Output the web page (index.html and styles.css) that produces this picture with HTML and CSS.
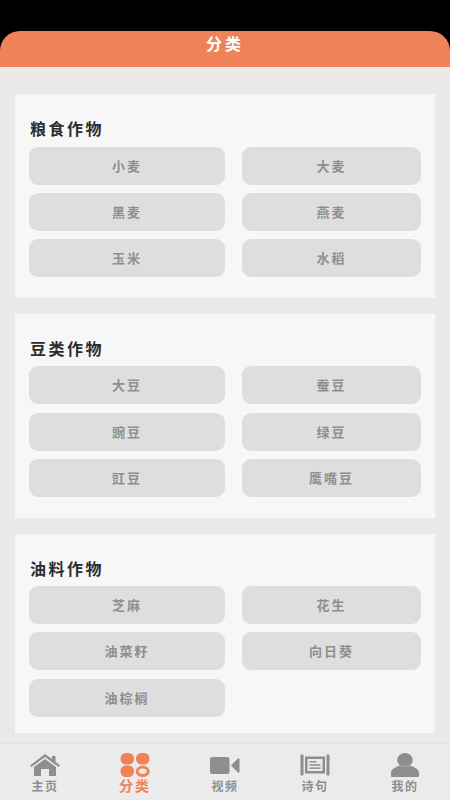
FILE: index.html

```html
<!DOCTYPE html>
<html lang="zh">

<head>
    <meta charset="UTF-8">
    <meta name="viewport" content="width=device-width, initial-scale=1.0">
    <title>分类</title>
    <link rel="stylesheet" href="styles.css">
</head>

<body>
    <div class="app">
        <header class="top-bar">分类</header>

        <main class="content">
            <section class="card">
                <h2>粮食作物</h2>
                <div class="items">
                    <div class="item">小麦</div>
                    <div class="item">大麦</div>
                    <div class="item">黑麦</div>
                    <div class="item">燕麦</div>
                    <div class="item">玉米</div>
                    <div class="item">水稻</div>
                </div>
            </section>

            <section class="card">
                <h2>豆类作物</h2>
                <div class="items">
                    <div class="item">大豆</div>
                    <div class="item">蚕豆</div>
                    <div class="item">豌豆</div>
                    <div class="item">绿豆</div>
                    <div class="item">豇豆</div>
                    <div class="item">鹰嘴豆</div>
                </div>
            </section>

            <section class="card card-last">
                <h2>油料作物</h2>
                <div class="items">
                    <div class="item">芝麻</div>
                    <div class="item">花生</div>
                    <div class="item">油菜籽</div>
                    <div class="item">向日葵</div>
                    <div class="item">油棕榈</div>
                </div>
            </section>
        </main>

        <nav class="tab-bar">
            <div class="tab">
                <svg viewBox="0 0 30 22" class="icon" fill="#8e8e8e">
                    <path d="M15 0 L22 5 V2 H25.5 V7.8 L30 11.5 L28.6 13 L15 3 L1.4 13 L0 11.5 Z" />
                    <path d="M15 5 L26 13 V22 H19 V15 H11 V22 H4 V13 Z" />
                </svg>
                <span>主页</span>
            </div>
            <div class="tab tab-active">
                <svg viewBox="0 0 30 24" class="icon" fill="#ef8259">
                    <rect x="0.5" y="0" width="13.5" height="11.5" rx="5.4" />
                    <rect x="16" y="0" width="13.5" height="11.5" rx="5.4" />
                    <rect x="0.5" y="12.5" width="13.5" height="11.5" rx="5.4" />
                    <ellipse cx="22.7" cy="18.3" rx="5.5" ry="4.2" fill="none" stroke="#ef8259" stroke-width="3" />
                </svg>
                <span>分类</span>
            </div>
            <div class="tab">
                <svg viewBox="0 0 30 22" class="icon" fill="#8e8e8e">
                    <rect x="0" y="3" width="19.5" height="17" rx="2.5" />
                    <path d="M21 11.5 L28 4.5 Q29.5 3.5 29.5 5.5 V17.5 Q29.5 19.5 28 18.5 Z" />
                </svg>
                <span>视频</span>
            </div>
            <div class="tab">
                <svg viewBox="0 0 30 22" class="icon" fill="#8e8e8e">
                    <rect x="0.5" y="0.5" width="3" height="21" rx="1" />
                    <rect x="26.5" y="0.5" width="3" height="21" rx="1" />
                    <path fill-rule="evenodd" d="M5 2.5 H25 V19.5 H5 Z M7.5 5 V17 H22.5 V5 Z" />
                    <rect x="9.5" y="7" width="7" height="1.5" />
                    <rect x="9.5" y="10.2" width="11" height="1.5" />
                    <rect x="9.5" y="13.4" width="11" height="1.5" />
                </svg>
                <span>诗句</span>
            </div>
            <div class="tab">
                <svg viewBox="0 0 30 24" class="icon" fill="#8e8e8e">
                    <ellipse cx="15" cy="7" rx="7.8" ry="7" />
                    <path d="M1.5 24 Q1 24 1 22 V20 C1 16 6 14 10 12.5 C13 14.5 17 14.5 20 12.5 C24 14 29 16 29 20 V22 Q29 24 28 24 Z" />
                </svg>
                <span>我的</span>
            </div>
        </nav>
    </div>
</body>

</html>
```

FILE: styles.css

```css
* {
    box-sizing: border-box;
}

html, body {
    margin: 0;
    padding: 0;
    background-color: #000;
}

body {
    font-family: "Noto Sans CJK SC", "Liberation Sans", sans-serif;
}

.app {
    width: 450px;
    height: 800px;
    padding-top: 31px;
    display: flex;
    flex-direction: column;
    overflow: hidden;
}

.top-bar {
    height: 35.5px;
    background-color: #ef8259;
    border-radius: 20px 20px 0 0;
    color: #fff;
    font-size: 16px;
    font-weight: 700;
    letter-spacing: 3px;
    line-height: 25px;
    text-align: center;
}

.content {
    flex: 1;
    padding: 27.5px 15px 0;
    background-color: #e9e9e9;
}

.card {
    height: 204.3px;
    margin-bottom: 15.5px;
    padding: 23px 14px 0;
    background-color: #f7f7f7;
}

.card-last {
    height: 199.5px;
    margin-bottom: 0;
}

.card h2 {
    margin: 0 0 6.5px 1px;
    color: #2c2c2c;
    font-size: 16px;
    font-weight: 700;
    letter-spacing: 2.5px;
    line-height: 23px;
}

.items {
    display: grid;
    grid-template-columns: 196px 179px;
    grid-auto-rows: 38px;
    column-gap: 17px;
    row-gap: 8.3px;
}

.item {
    background-color: #dedede;
    border-radius: 9px;
    color: #8e8e8e;
    font-size: 13px;
    font-weight: 700;
    letter-spacing: 2px;
    line-height: 38px;
    text-align: center;
}

.tab-bar {
    height: 57px;
    padding-top: 9px;
    display: flex;
    justify-content: space-around;
    background-color: #ebebeb;
    border-top: 1px solid #e2e2e2;
}

.tab {
    width: 90px;
    display: flex;
    flex-direction: column;
    align-items: center;
    justify-content: space-between;
    padding-bottom: 6px;
    color: #8e8e8e;
    font-size: 12px;
    font-weight: 700;
    letter-spacing: 1.5px;
    line-height: 16px;
}

.tab-active {
    padding-bottom: 7px;
    color: #ef8259;
    font-size: 14px;
    letter-spacing: 2px;
}

.icon {
    width: 30px;
    height: 24px;
}
```
